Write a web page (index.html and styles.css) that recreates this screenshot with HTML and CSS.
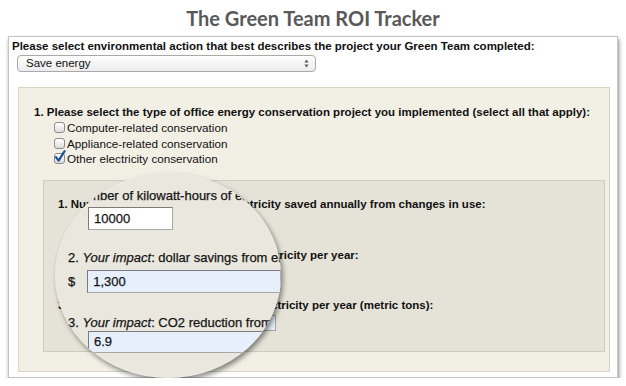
FILE: index.html
```html
<!DOCTYPE html>
<html>
<head>
    <title>The Green Team ROI Tracker</title>
    <link rel="stylesheet" href="styles.css">
</head>
<body>
    <h1 class="title">The Green Team ROI Tracker</h1>
    <div class="tracker">
        <p class="question">Please select environmental action that best describes the project your Green Team completed:</p>
        <div class="select">
            <span>Save energy</span>
            <svg class="arrows" width="5" height="9" viewBox="0 0 5 9"><path d="M0.4 3.6 L2.5 0.6 L4.6 3.6 Z M0.4 5.4 L2.5 8.4 L4.6 5.4 Z" fill="#5a5a5a"/></svg>
        </div>
        <div class="action-panel">
            <p class="question">1. Please select the type of office energy conservation project you implemented (select all that apply):</p>
            <ul class="options">
                <li><span class="check"></span>Computer-related conservation</li>
                <li><span class="check"></span>Appliance-related conservation</li>
                <li><span class="check checked"><svg width="12" height="13" viewBox="0 0 12 13"><path d="M2 7.2 L4.6 10.6 L10.6 1.2" fill="none" stroke="#1c4f9e" stroke-width="2.2" stroke-linecap="round" stroke-linejoin="round"/></svg></span>Other electricity conservation</li>
            </ul>
            <div class="detail-panel">
                <div class="field">
                    <p class="question">1. Number of kilowatt-hours of electricity saved annually from changes in use:</p>
                    <div class="input short">10000</div>
                </div>
                <div class="field">
                    <p class="question">2. <em>Your impact</em>: dollar savings from electricity per year:</p>
                    <div class="row"><span class="unit">$</span><div class="input result">1,300</div></div>
                </div>
                <div class="field">
                    <p class="question">3. <em>Your impact</em>: CO2 reduction from electricity per year (metric tons):</p>
                    <div class="input result indent">6.9</div>
                </div>
            </div>
        </div>
    </div>

    <!-- magnifier over the results -->
    <div class="lens">
        <div class="lens-view">
            <p class="lens-line first">1. Number of kilowatt-hours of electricity</p>
            <div class="lens-input short">10000</div>
            <p class="lens-line">2. <em>Your impact</em>: dollar savings from electricity</p>
            <div class="lens-row"><span class="lens-unit">$</span><div class="lens-input result">1,300</div></div>
            <p class="lens-line tight">3. <em>Your impact</em>: CO2 reduction from electricity</p>
            <div class="lens-input result indent">6.9</div>
        </div>
    </div>
</body>
</html>
```

FILE: styles.css
```css
body {
    margin: 0;
    background: #fff;
    color: #111;
    font-family: "Liberation Sans", Arial, sans-serif;
    position: relative;
}
p {
    margin: 0;
}
.title {
    margin: 0;
    padding: 6px 0;
    line-height: 24px;
    font-family: Lato, "Liberation Sans", sans-serif;
    font-size: 20px;
    font-weight: bold;
    color: #595959;
    text-align: center;
}
.tracker {
    margin: 0 8px;
    padding: 2px 7px 5px 3px;
    border: 1px solid #c4c4c4;
    background: #fff;
    box-shadow: 1px 3px 4px rgba(0, 0, 0, 0.45);
}
.question {
    font-size: 11.5px;
    font-weight: bold;
    line-height: 14px;
    white-space: nowrap;
}
.select {
    display: flex;
    align-items: center;
    justify-content: space-between;
    width: 299px;
    height: 17px;
    box-sizing: border-box;
    margin: 2px 0 0 5px;
    padding: 0 6px 0 8px;
    border: 1px solid #a9a9a9;
    border-radius: 4px;
    background: linear-gradient(#ffffff, #ececec);
    font-size: 11.5px;
    line-height: 15px;
}
.action-panel {
    margin: 15px 0 0 6px;
    padding: 17px 4px 19px 15px;
    border: 1px solid #d8d5c6;
    background: #f2f0e5;
}
.options {
    list-style: none;
    margin: 1px 0 0;
    padding: 0 0 0 20px;
    font-size: 11.7px;
}
.options li {
    display: flex;
    align-items: center;
    height: 15.5px;
}
.check {
    position: relative;
    width: 11px;
    height: 11px;
    box-sizing: border-box;
    margin-right: 2px;
    border: 1px solid #8c8c8c;
    border-radius: 3px;
    background: linear-gradient(#ffffff, #dcdcdc);
}
.check svg {
    position: absolute;
    left: -1px;
    top: -4px;
}
.detail-panel {
    margin: 13.5px 0 0 9px;
    padding: 16px 14px 20px;
    border: 1px solid #cfccbd;
    background: #e5e3d7;
}
.field {
    margin-bottom: 20px;
}
.field:nth-child(2) {
    margin-bottom: 17px;
}
.field:last-child {
    margin-bottom: 0;
}
.input {
    height: 16px;
    box-sizing: border-box;
    margin-top: 3px;
    padding-left: 3px;
    border: 1px solid #a4a4a4;
    font-size: 11px;
    line-height: 14px;
}
.input.short {
    width: 68px;
    margin: 1px 0 0 27px;
    background: #fff;
}
.input.result {
    width: 203px;
    background: #e6effb;
}
.input.indent {
    margin-left: 15px;
}
.row {
    display: flex;
    align-items: flex-end;
}
.unit {
    width: 15px;
    font-size: 11px;
}
.row .input {
    margin-top: 3px;
}

.lens {
    position: absolute;
    left: 55px;
    top: 173px;
    width: 226px;
    height: 205px;
    border-radius: 50%;
    overflow: hidden;
    background: #e9e7de;
    box-shadow: 2px 3px 5px rgba(0, 0, 0, 0.45), inset 0 0 2px rgba(255, 255, 255, 0.6);
}
.lens-view {
    padding-top: 15px;
    font-size: 13px;
    color: #151515;
    -webkit-text-stroke: 0.25px #151515;
}
.lens-line {
    margin: 20px 0 0 13px;
    line-height: 16px;
    white-space: nowrap;
}
.lens-line.first {
    margin: 0 0 0 3px;
}
.lens-line.tight {
    margin-top: 22px;
}
.lens-input {
    height: 23px;
    box-sizing: border-box;
    padding-left: 5px;
    border: 1px solid #a8a8a8;
    border-top-color: #7c7c7c;
    border-left-color: #7c7c7c;
    line-height: 21px;
}
.lens-input.short {
    width: 85px;
    margin: 3px 0 0 33px;
    background: #fff;
}
.lens-input.result {
    width: 250px;
    background: #e6effb;
}
.lens-input.indent {
    height: 22px;
    margin-left: 33px;
    line-height: 20px;
}
.lens-row {
    display: flex;
    align-items: center;
    margin-top: 4px;
}
.lens-unit {
    width: 25px;
    margin-left: 13px;
}
```
